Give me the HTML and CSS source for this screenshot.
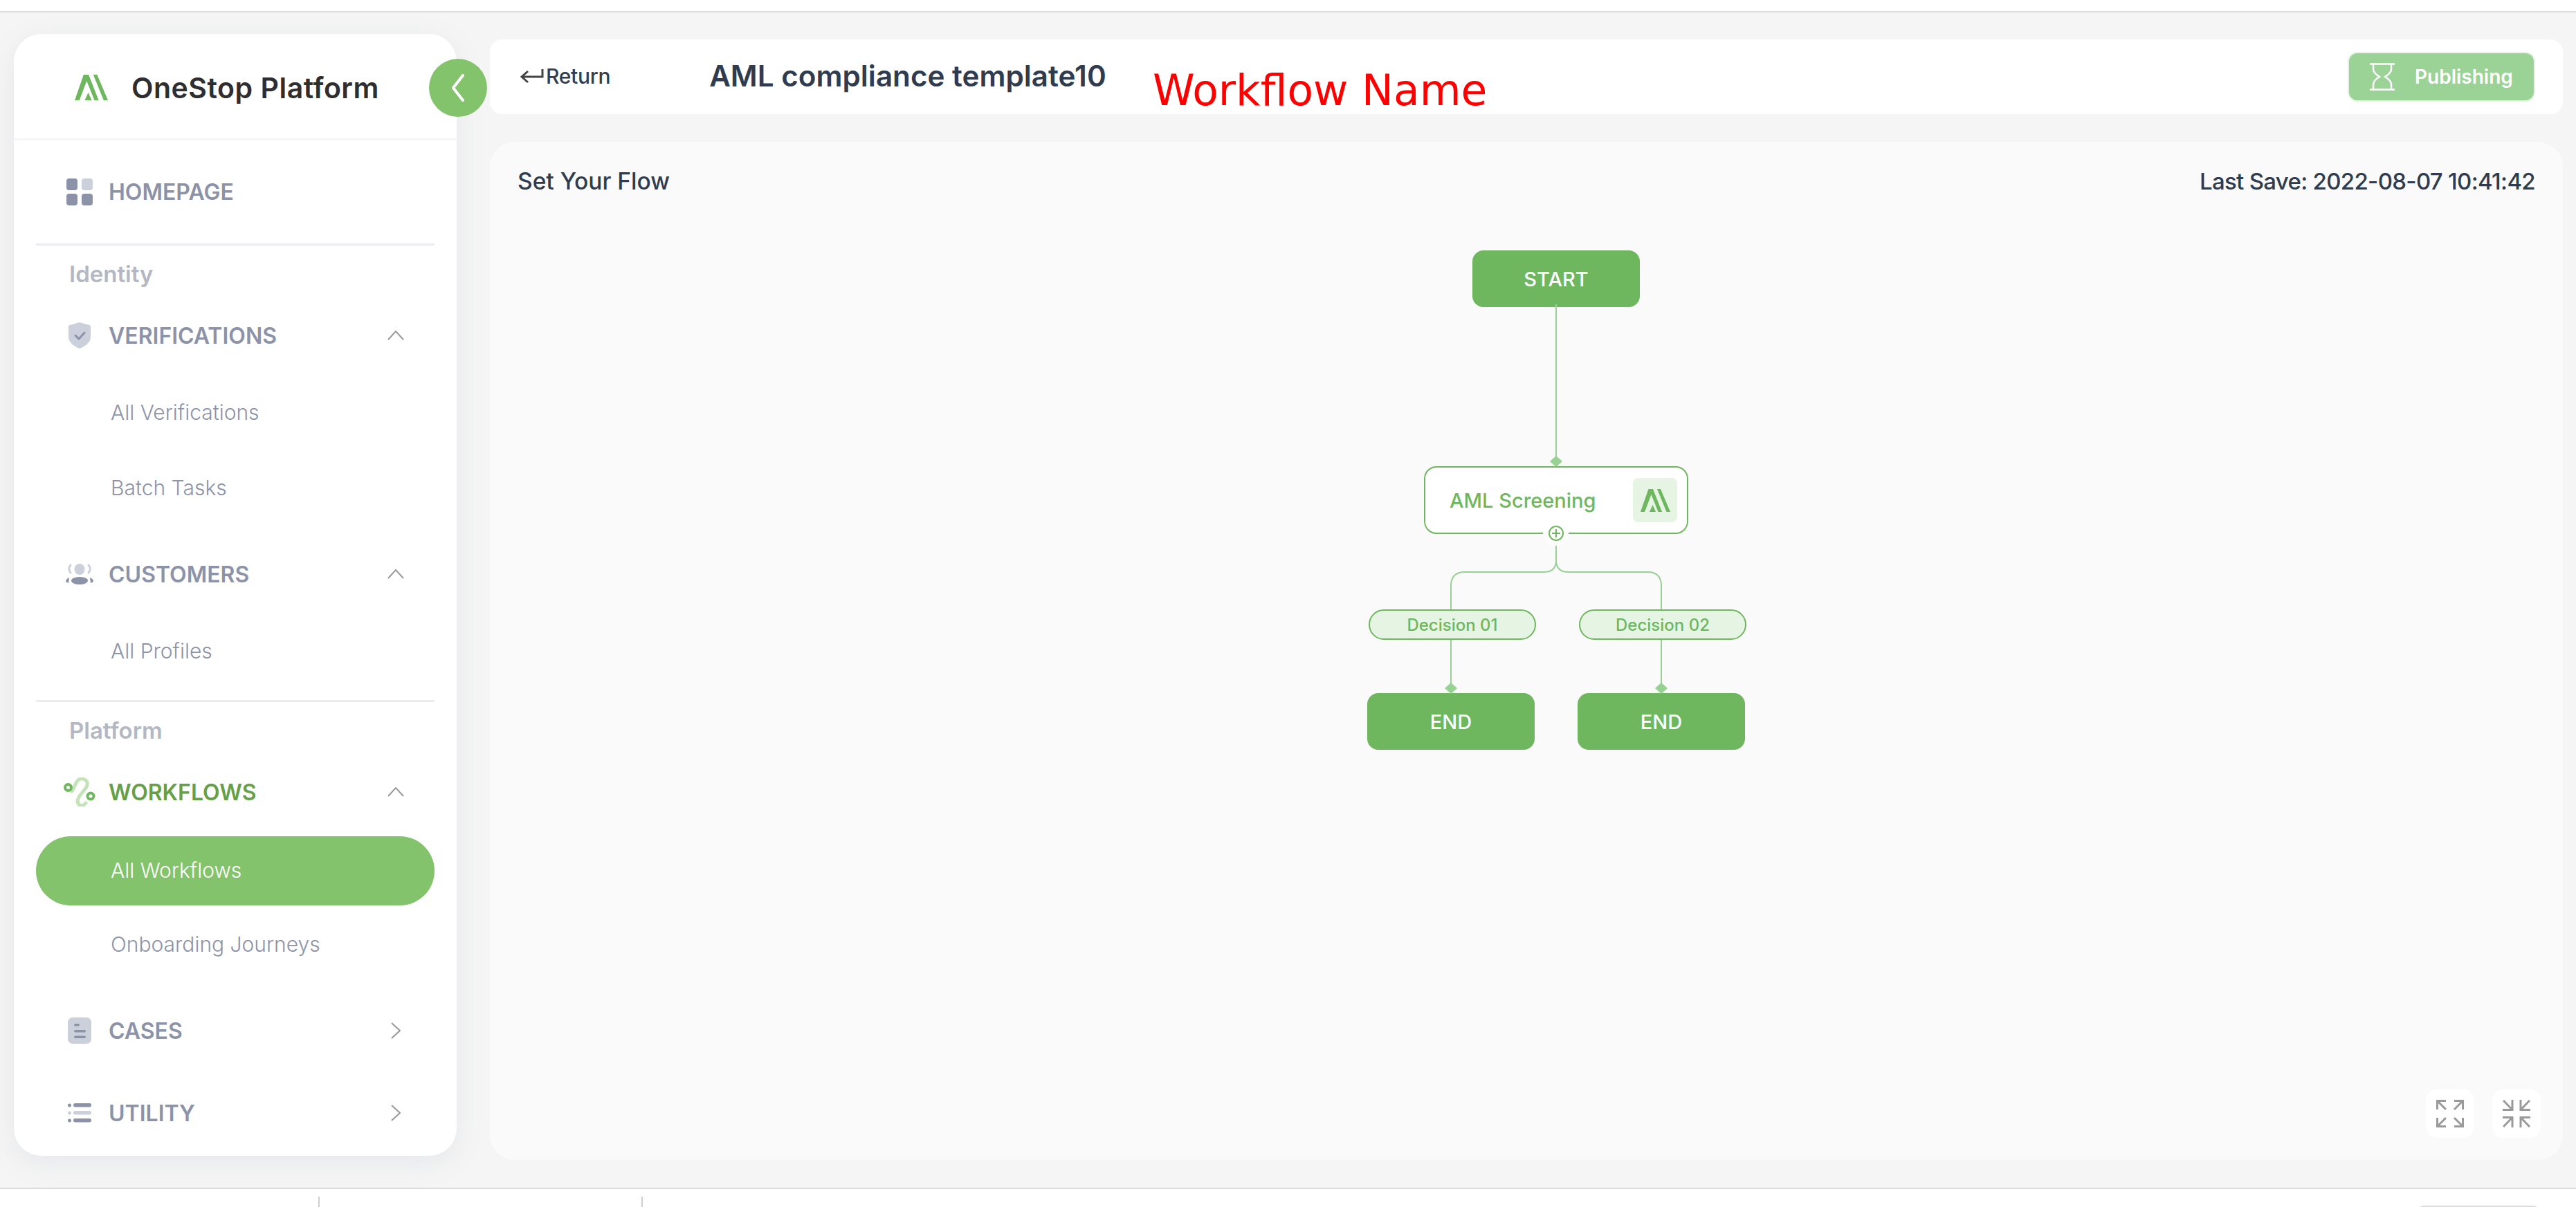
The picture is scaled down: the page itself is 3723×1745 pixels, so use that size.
FILE: index.html
```html
<!DOCTYPE html>
<html lang="en">
<head>
  <meta charset="UTF-8">
  <title>OneStop Platform - Workflow</title>
  <link rel="stylesheet" href="styles.css">
</head>
<body>
  <div class="top-strip"></div>

  <div class="page">
    <aside class="sidebar">
      <div class="brand">
        <svg class="brand-logo" viewBox="0 0 43 33"><path fill="#6eb75e" d="M0 33 11.500 0h6.500L31 33h-5.500L15.500 8 6 33zM24 0h5l14 33h-5.500zM13 33l4.500-10 4.500 10z"/></svg>
        <span class="brand-name">OneStop Platform</span>
      </div>
      <button class="collapse-btn">
        <svg viewBox="0 0 20 40" width="20" height="40"><path d="M17 2 3 20l14 18" fill="none" stroke="#fff" stroke-width="4" stroke-linecap="round" stroke-linejoin="round"/></svg>
      </button>

      <nav class="nav">
        <a class="nav-head nav-home">
          <span class="nav-icon">
            <svg viewBox="0 0 38 39" width="38" height="39"><rect width="16" height="17" rx="4" fill="#8c93a9"/><rect x="22" width="16" height="17" rx="4" fill="#ccd0da"/><rect y="22" width="16" height="17" rx="4" fill="#8c93a9"/><rect x="22" y="22" width="16" height="17" rx="4" fill="#8c93a9"/></svg>
          </span>
          HOMEPAGE
        </a>
        <div class="nav-divider"></div>

        <div class="nav-label">Identity</div>
        <a class="nav-head nav-first">
          <span class="nav-icon">
            <svg viewBox="0 0 32 38" width="32" height="38"><path d="M16 0 30 4a2 2 0 0 1 2 2v15c0 8-7 13-16 17C7 34 0 29 0 21V6a2 2 0 0 1 2-2z" fill="#ccd0da"/><path d="M10 19l5 5 8-9" fill="none" stroke="#8c93a9" stroke-width="3" stroke-linecap="round" stroke-linejoin="round"/></svg>
          </span>
          VERIFICATIONS
          <svg class="chevron" viewBox="0 0 24 14" width="24" height="14"><path d="M1 13 12 1l11 12" fill="none" stroke="#999" stroke-width="2"/></svg>
        </a>
        <a class="nav-sub nav-sub-first">All Verifications</a>
        <a class="nav-sub">Batch Tasks</a>

        <a class="nav-head nav-next">
          <span class="nav-icon">
            <svg viewBox="0 0 42 30" width="42" height="30"><ellipse cx="21" cy="8" rx="7.500" ry="8" fill="#ccd0da"/><path d="M8 2C5 5 5 10 8 13M34 2c3 3 3 8 0 11" fill="none" stroke="#ccd0da" stroke-width="3" stroke-linecap="round"/><ellipse cx="21" cy="24.500" rx="12" ry="5.500" fill="#8c93a9"/><path d="M6 20c-3 1-5 3-5 6l4 2M36 20c3 1 5 3 5 6l-4 2" fill="#8c93a9"/></svg>
          </span>
          CUSTOMERS
          <svg class="chevron" viewBox="0 0 24 14" width="24" height="14"><path d="M1 13 12 1l11 12" fill="none" stroke="#999" stroke-width="2"/></svg>
        </a>
        <a class="nav-sub nav-sub-first">All Profiles</a>
        <div class="nav-divider nav-divider-low"></div>

        <div class="nav-label">Platform</div>
        <a class="nav-head nav-first nav-active">
          <span class="nav-icon">
            <svg viewBox="0 0 46 42" width="46" height="42"><path d="M12 20 19 6Q22 1 28 2 37 5 33 14L22 28Q18 36 23 40 28 42 32 37" fill="none" stroke="#c5e3b9" stroke-width="5" stroke-linecap="round"/><circle cx="6.500" cy="14.500" r="4.500" fill="#fff" stroke="#6eb75e" stroke-width="4"/><circle cx="39" cy="27" r="4.500" fill="#fff" stroke="#6eb75e" stroke-width="4"/></svg>
          </span>
          WORKFLOWS
          <svg class="chevron" viewBox="0 0 24 14" width="24" height="14"><path d="M1 13 12 1l11 12" fill="none" stroke="#999" stroke-width="2"/></svg>
        </a>
        <a class="nav-sub nav-sub-active">All Workflows</a>
        <a class="nav-sub">Onboarding Journeys</a>

        <a class="nav-head nav-next">
          <span class="nav-icon">
            <svg viewBox="0 0 34 38" width="34" height="38"><rect width="34" height="38" rx="7" fill="#ccd0da"/><rect x="9" y="9" width="8" height="3.500" rx="1.700" fill="#8c93a9"/><rect x="9" y="18" width="17" height="3.500" rx="1.700" fill="#8c93a9"/><rect x="9" y="26.500" width="17" height="3.500" rx="1.700" fill="#8c93a9"/></svg>
          </span>
          CASES
          <svg class="chevron chevron-right" viewBox="0 0 14 24" width="14" height="24"><path d="M1 1l12 11L1 23" fill="none" stroke="#999" stroke-width="2"/></svg>
        </a>
        <a class="nav-head nav-last">
          <span class="nav-icon">
            <svg viewBox="0 0 34 28" width="34" height="28"><circle cx="2.500" cy="3" r="2.500" fill="#8c93a9"/><rect x="8" width="26" height="5.500" rx="2.700" fill="#8c93a9"/><circle cx="2.500" cy="14" r="2.500" fill="#ccd0da"/><rect x="8" y="11" width="26" height="5.500" rx="2.700" fill="#ccd0da"/><circle cx="2.500" cy="25" r="2.500" fill="#8c93a9"/><rect x="8" y="22" width="26" height="5.500" rx="2.700" fill="#8c93a9"/></svg>
          </span>
          UTILITY
          <svg class="chevron chevron-right" viewBox="0 0 14 24" width="14" height="24"><path d="M1 1l12 11L1 23" fill="none" stroke="#999" stroke-width="2"/></svg>
        </a>
      </nav>
    </aside>

    <main class="content">
      <header class="topbar">
        <a class="return">
          <svg viewBox="0 0 34 24" width="34" height="24"><path d="M32 2v11H3M11 5 2 13l9 8" fill="none" stroke="#444" stroke-width="3"/></svg>
          Return
        </a>
        <h1 class="wf-title">AML compliance template10</h1>
        <span class="note">Workflow Name</span>
        <button class="publish">
          <svg viewBox="0 0 36 40" width="36" height="40"><path d="M0 1.500h36M0 38.500h36M5 2v7c0 5 4 8 9 11-5 3-9 6-9 11v7M31 2v7c0 5-4 8-9 11 5 3 9 6 9 11v7" fill="none" stroke="#fff" stroke-width="2.500"/></svg>
          Publishing
        </button>
      </header>

      <section class="panel">
        <div class="panel-head">
          <span class="panel-title">Set Your Flow</span>
          <span class="last-save">Last Save: 2022-08-07 10:41:42</span>
        </div>

        <div class="flow">
          <svg class="links" viewBox="0 0 548 722" width="548" height="722">
            <g fill="none" stroke="#97d294" stroke-width="2">
              <path d="M273 78V300"/>
              <path d="M273 426V448Q273 465 255 465H141Q121 465 121 485V519"/>
              <path d="M273 448Q273 465 291 465H405Q425 465 425 485V519"/>
              <path d="M121 563V628"/>
              <path d="M425 563V628"/>
            </g>
            <g fill="#97d294">
              <path d="M273 297l9 8-9 8-9-8z"/>
              <path d="M121 625l9 8-9 8-9-8z"/>
              <path d="M425 625l9 8-9 8-9-8z"/>
            </g>
          </svg>

          <div class="node node-solid node-start">START</div>
          <div class="node node-step">
            AML Screening
            <span class="step-icon">
              <svg viewBox="0 0 43 33" width="43" height="33"><path fill="#6eb75e" d="M0 33 11.500 0h6.500L31 33h-5.500L15.500 8 6 33zM24 0h5l14 33h-5.500zM13 33l4.500-10 4.500 10z"/></svg>
            </span>
          </div>
          <span class="add-btn">
            <svg viewBox="0 0 22 22" width="22" height="22"><circle cx="11" cy="11" r="10" fill="none" stroke="#6eb75e" stroke-width="2"/><path d="M11 5v12M5 11h12" stroke="#6eb75e" stroke-width="2"/></svg>
          </span>
          <div class="node node-decision node-dec1">Decision 01</div>
          <div class="node node-decision node-dec2">Decision 02</div>
          <div class="node node-solid node-end1">END</div>
          <div class="node node-solid node-end2">END</div>
        </div>

        <div class="zoom-tools">
          <button class="zoom-btn">
            <svg viewBox="0 0 40 40" width="40" height="40"><g fill="none" stroke="#9a9a9a" stroke-width="3"><path d="M1.500 14V1.500H14M1.500 1.500 14 14"/><path d="M26 1.500h12.500V14M38.500 1.500 26 14"/><path d="M1.500 26v12.500H14M1.500 38.500 14 26"/><path d="M26 38.500h12.500V26M38.500 38.500 26 26"/></g></svg>
          </button>
          <button class="zoom-btn">
            <svg viewBox="0 0 40 40" width="40" height="40"><g fill="none" stroke="#9a9a9a" stroke-width="3"><path d="M14 0v14.500H0M14 14.500 1 1"/><path d="M26 0v14.500h14M26 14.500 39 1"/><path d="M14 40V25.500H0M14 25.500 1 39"/><path d="M26 40V25.500h14M26 25.500 39 39"/></g></svg>
          </button>
        </div>
      </section>
    </main>
  </div>

  <footer class="bottom-strip">
    <span class="tick tick-a"></span>
    <span class="tick tick-b"></span>
    <span class="bottom-box"></span>
  </footer>
</body>
</html>
```

FILE: styles.css
```css
* {
  box-sizing: border-box;
}
html, body {
  margin: 0;
  height: 100%;
}
body {
  display: flex;
  flex-direction: column;
  width: 3723px;
  height: 1745px;
  overflow: hidden;
  background: #fff;
  font-family: Inter, "Liberation Sans", sans-serif;
  color: #2f3b4e;
}
button {
  font-family: inherit;
  border: none;
  padding: 0;
}

.top-strip {
  height: 18px;
  flex: none;
  background: #fff;
  border-bottom: 2px solid #dcdcdc;
}
.page {
  flex: 1;
  display: flex;
  align-items: flex-start;
  padding: 31px 0 0 20px;
  background: #f5f5f5;
}

/* sidebar */
.sidebar {
  position: relative;
  width: 640px;
  height: 1622px;
  flex: none;
  background: #fff;
  border-radius: 40px;
  box-shadow: 0 10px 40px rgba(110, 120, 150, 0.1);
}
.brand {
  display: flex;
  align-items: center;
  gap: 34px;
  height: 154px;
  padding: 4px 0 0 88px;
  border-bottom: 3px solid #f5f5f7;
}
.brand-logo {
  width: 48px;
  height: 37px;
}
.brand-name {
  font-size: 41px;
  font-weight: 600;
  letter-spacing: 0.5px;
  color: #2e2e30;
}
.collapse-btn {
  position: absolute;
  top: 36px;
  right: -44px;
  width: 84px;
  height: 84px;
  display: flex;
  align-items: center;
  justify-content: center;
  border-radius: 50%;
  background: #83c36c;
}

.nav {
  display: flex;
  flex-direction: column;
  padding: 44px 32px 0;
}
.nav-head {
  display: flex;
  align-items: center;
  height: 60px;
  padding-left: 40px;
  font-size: 32px;
  font-weight: 600;
  color: #8c93a9;
}
.nav-icon {
  width: 46px;
  margin-right: 19px;
  display: flex;
  justify-content: center;
  align-items: center;
}
.chevron {
  margin-left: auto;
  margin-right: 44px;
}
.chevron-right {
  margin-right: 49px;
}
.nav-first {
  margin-top: 39px;
}
.nav-next {
  margin-top: 44px;
}
.nav-last {
  margin-top: 59px;
}
.nav-active {
  color: #659f47;
}
.nav-home {
  margin-bottom: 45px;
}
.nav-divider {
  height: 3px;
  flex: none;
  background: #ebebf0;
}
.nav-divider-low {
  margin-top: 20px;
}
.nav-label {
  height: 40px;
  margin-top: 21px;
  padding-left: 48px;
  line-height: 40px;
  font-size: 33px;
  font-weight: 600;
  color: #b3b8c2;
}
.nav-sub {
  display: flex;
  align-items: center;
  height: 100px;
  margin-top: 9px;
  padding: 0 0 2px 108px;
  border-radius: 50px;
  font-size: 30px;
  font-weight: 350;
  color: #8c93a9;
}
.nav-sub-first {
  margin-top: 32px;
}
.nav-sub-active {
  margin-top: 34px;
  background: #83c36c;
  color: #fff;
}
.nav-sub-active + .nav-sub {
  margin-top: 7px;
}

/* right side */
.content {
  width: 2996px;
  margin: 8px 0 0 48px;
}
.topbar {
  position: relative;
  display: flex;
  align-items: center;
  height: 108px;
  padding: 0 40px 0 44px;
  background: #fff;
  border-radius: 18px;
}
.return {
  display: flex;
  align-items: center;
  gap: 3px;
  margin-bottom: 3px;
  font-size: 30px;
  font-weight: 500;
  letter-spacing: -0.3px;
  color: #333d4d;
}
.wf-title {
  margin: 0 0 4px 143px;
  font-size: 42.200px;
  font-weight: 600;
  color: #2f3b4e;
}
.note {
  position: absolute;
  left: 958px;
  top: 38px;
  font-family: "DejaVu Sans", sans-serif;
  font-size: 61.500px;
  color: #f00;
}
.publish {
  display: flex;
  align-items: center;
  gap: 29px;
  margin-left: auto;
  width: 271px;
  height: 72px;
  padding-left: 30px;
  background: #9bd396;
  border: 2px solid #e5f4e3;
  border-radius: 14px;
  font-size: 28px;
  font-weight: 600;
  color: #fff;
}

.panel {
  position: relative;
  height: 1472px;
  margin-top: 40px;
  padding: 37px 40px 0;
  background: #fafafa;
  border-radius: 36px;
}
.panel-head {
  display: flex;
  justify-content: space-between;
  font-weight: 500;
  line-height: 40px;
}
.panel-title {
  font-size: 33.500px;
}
.last-save {
  font-size: 33px;
  letter-spacing: -0.7px;
}

/* flow diagram, nodes sit on a free canvas */
.flow {
  position: relative;
  width: 548px;
  height: 722px;
  margin: 80px 0 0 1228px;
}
.links {
  position: absolute;
  left: 0;
  top: 0;
  z-index: 1;
}
.node {
  position: absolute;
  display: flex;
  align-items: center;
  justify-content: center;
}
.node-solid {
  width: 242px;
  height: 82px;
  background: #6eb75e;
  border-radius: 16px;
  font-size: 29px;
  font-weight: 500;
  color: #fff;
}
.node-start {
  left: 152px;
  top: 0;
}
.node-end1 {
  left: 0;
  top: 640px;
}
.node-end2 {
  left: 304px;
  top: 640px;
}
.node-step {
  left: 82px;
  top: 312px;
  width: 382px;
  height: 98px;
  justify-content: space-between;
  padding: 0 14px 0 35px;
  background: #fff;
  border: 2px solid #6eb75e;
  border-radius: 18px;
  font-size: 29px;
  font-weight: 500;
  color: #6eb75e;
}
.step-icon {
  display: flex;
  align-items: center;
  justify-content: center;
  width: 64px;
  height: 64px;
  background: #e5f4e3;
  border-radius: 8px;
}
.add-btn {
  position: absolute;
  left: 254px;
  top: 390px;
  z-index: 2;
  width: 37px;
  height: 37px;
  display: flex;
  align-items: center;
  justify-content: center;
  background: #fff;
  border-radius: 50%;
}
.node-decision {
  top: 519px;
  width: 242px;
  height: 44px;
  background: #e5f4e3;
  border: 2px solid #6eb75e;
  border-radius: 22px;
  font-size: 24px;
  font-weight: 500;
  color: #6eb75e;
}
.node-dec1 {
  left: 2px;
}
.node-dec2 {
  left: 306px;
}

.zoom-tools {
  position: absolute;
  right: 32px;
  bottom: 32px;
  display: flex;
  gap: 26px;
}
.zoom-btn {
  width: 70px;
  height: 70px;
  display: flex;
  align-items: center;
  justify-content: center;
  background: #fff;
  border-radius: 16px;
}

.bottom-strip {
  display: flex;
  flex: none;
  height: 28px;
  padding-top: 11px;
  overflow: hidden;
  background: #fff;
  border-top: 2px solid #dcdcdc;
}
.tick {
  width: 2px;
  height: 20px;
  background: #cfcfcf;
}
.tick-a {
  margin-left: 460px;
}
.tick-b {
  margin-left: 465px;
}
.bottom-box {
  width: 172px;
  height: 20px;
  margin: 13px 0 0 2567px;
  border: 2px solid #ddd;
  border-radius: 6px;
}
```
